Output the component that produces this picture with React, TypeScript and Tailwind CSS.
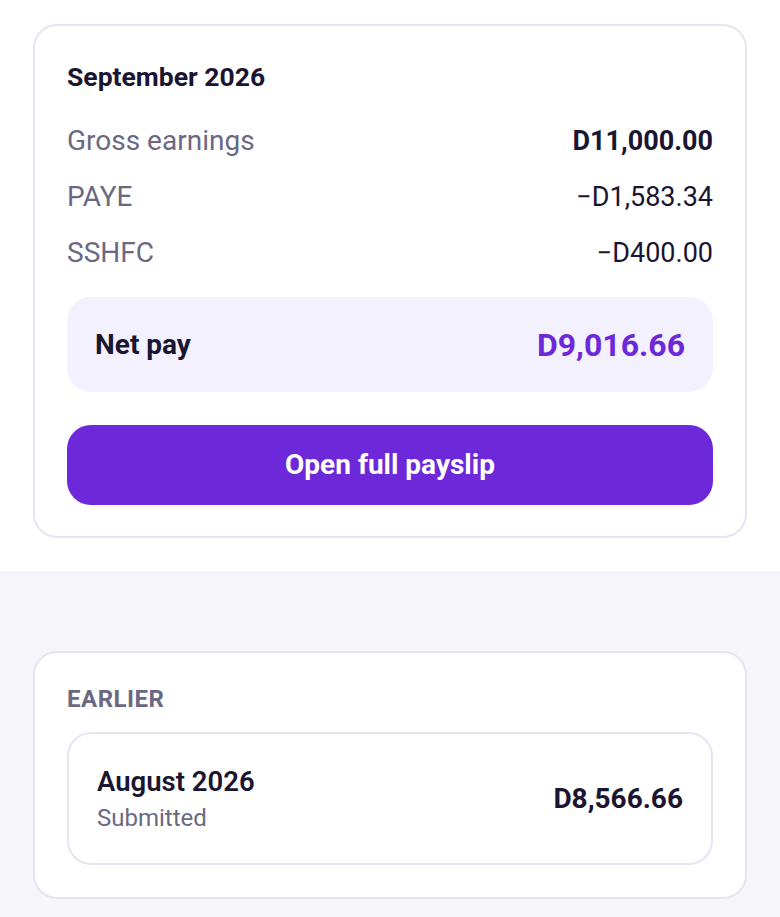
import React from "react";

const font = { fontFamily: "Roboto, 'Noto Sans', sans-serif" };

function Row({ label, value, strong }: { label: string; value: string; strong?: boolean }) {
  return (
    <div className="flex items-center justify-between h-[56px]">
      <span className="text-[28px] text-[#6b6883]">{label}</span>
      <span className={`text-[27px] text-[#1a1530] ${strong ? "font-bold" : ""}`}>{value}</span>
    </div>
  );
}

export default function App() {
  return (
    <div style={font} className="w-[780px] min-h-[917px] bg-[#f6f5fa]">
      <div className="bg-white px-[33px] pt-[24px] pb-[33px]">
        <div className="rounded-[24px] border-2 border-[#e6e4f0] px-[32px] pt-[35px] pb-[31px]">
          <div className="text-[26.5px] font-bold text-[#1a1530] leading-[32px]">September 2026</div>
          <div className="mt-[20px]">
            <Row label="Gross earnings" value="D11,000.00" strong />
            <Row label="PAYE" value="−D1,583.34" />
            <Row label="SSHFC" value="−D400.00" />
          </div>
          <div className="mt-[16px] h-[95px] rounded-[24px] bg-[#f3f1fd] px-[28px] flex items-center justify-between">
            <span className="text-[28px] font-bold text-[#1a1530]">Net pay</span>
            <span className="text-[32px] font-bold text-[#6d28d9]">D9,016.66</span>
          </div>
          <button className="mt-[33px] w-full h-[80px] rounded-[24px] bg-[#6d28d9] text-white text-[28px] font-bold flex items-center justify-center">
            Open full payslip
          </button>
        </div>
      </div>
      <div className="px-[33px] pt-[80px] pb-[20px]">
        <div className="rounded-[24px] border-2 border-[#e6e4f0] bg-white px-[32px] pt-[31px] pb-[32px]">
          <div className="text-[24px] font-bold text-[#6b6883] tracking-[0.5px] leading-[30px]">EARLIER</div>
          <div className="mt-[18px] h-[133px] rounded-[24px] border-2 border-[#e6e4f0] px-[28px] flex items-center justify-between">
            <div className="flex flex-col">
              <span className="text-[27.5px] font-semibold text-[#1a1530] leading-[34px]">August 2026</span>
              <span className="text-[24px] text-[#6b6883] leading-[30px] mt-[4px]">Submitted</span>
            </div>
            <span className="text-[28px] font-bold text-[#1a1530]">D8,566.66</span>
          </div>
        </div>
      </div>
    </div>
  );
}
